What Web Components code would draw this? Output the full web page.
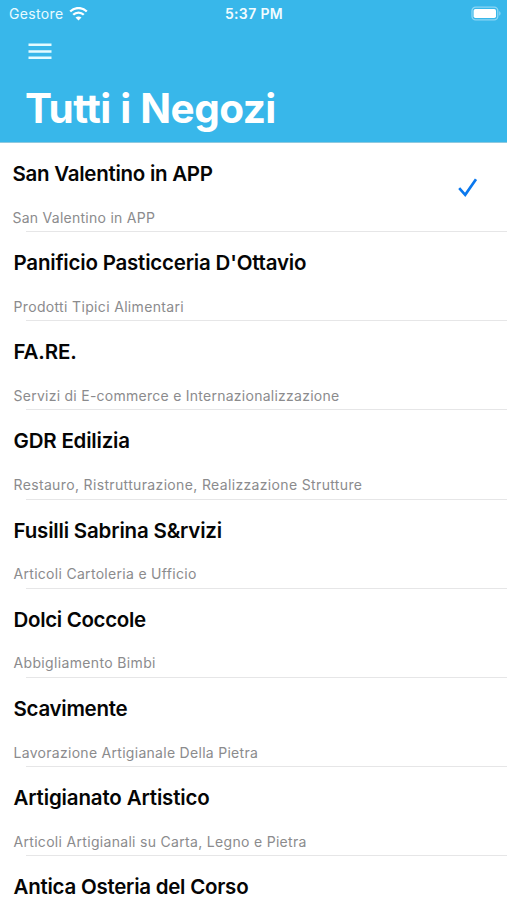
<!DOCTYPE html>
<html lang="it">
<head>
  <meta charset="utf-8">
  <meta name="viewport" content="width=device-width, initial-scale=1">
  <title>Tutti i Negozi</title>
  <style>
    body {
      margin: 0;
      height: 900px;
      overflow: hidden;
      background-color: #fff;
      font-family: Inter, Roboto, sans-serif;
    }
  </style>
</head>
<body>
  <shop-header>
    <status-bar slot="status" carrier="Gestore" time="5:37 PM"></status-bar>
    Tutti i Negozi
  </shop-header>
  <shop-list></shop-list>

  <script>
    class StatusBar extends HTMLElement {
      constructor() {
        super();
        this.shadowDOM = this.attachShadow({ mode: 'open' });
      }

      connectedCallback() {
        this.shadowDOM.innerHTML = `
          <style>
            :host {
              display: grid;
              grid-template-columns: 1fr auto 1fr;
              align-items: center;
              height: 28px;
              padding: 0 6px 0 9px;
              color: #e9fbff;
              font-size: 14px;
              line-height: 28px;
            }
            .carrier {
              display: flex;
              align-items: center;
              gap: 5px;
              letter-spacing: 0.35px;
            }
            .time {
              margin-right: 2px;
              font-weight: 600;
              font-size: 14px;
              letter-spacing: 0.35px;
              color: #f2fcff;
            }
            .battery {
              justify-self: end;
            }
            svg {
              display: block;
            }
          </style>
          <div class="carrier">
            <span>${this.getAttribute('carrier')}</span>
            <svg width="19" height="15" viewBox="0 0 19 15" fill="none" stroke="#fff" stroke-width="2.3">
              <path d="M1.2 4.5C5.8 -.1 13.2 -.1 17.8 4.5"/>
              <path d="M4.2 7.8c3-3 7.6-3 10.6 0"/>
              <path d="M9.5 13.6 6.5 10.6c1.7-1.6 4.3-1.6 6 0z" fill="#fff" stroke="none"/>
            </svg>
          </div>
          <span class="time">${this.getAttribute('time')}</span>
          <svg class="battery" width="31" height="16" viewBox="0 0 31 16">
            <rect x="2" y="1.2" width="25.8" height="12.6" rx="3.6" fill="none" stroke="#8bd6f4" stroke-width="1.3"/>
            <rect x="3.6" y="2.9" width="22.4" height="9.2" rx="1.8" fill="#fff"/>
            <path d="M29.2 5.3c1.8.6 1.8 3.8 0 4.4z" fill="#8bd6f4"/>
          </svg>
        `;
      }
    }

    class ShopHeader extends HTMLElement {
      constructor() {
        super();
        this.shadowDOM = this.attachShadow({ mode: 'open' });
      }

      connectedCallback() {
        this.shadowDOM.innerHTML = `
          <style>
            :host {
              display: flex;
              flex-direction: column;
              box-sizing: border-box;
              height: 143px;
              background-color: #38b7ea;
              border-bottom: 1px solid #8fc9df;
            }
            .menu {
              display: flex;
              align-self: flex-start;
              margin: 14px 0 0 28px;
              padding: 0;
              border: none;
              background: none;
            }
            h1 {
              margin: 23px 0 0 25px;
              color: #fff;
              font-size: 40.5px;
              line-height: 50px;
              font-weight: 700;
              letter-spacing: -0.55px;
              word-spacing: 0.5px;
              white-space: nowrap;
            }
          </style>
          <slot name="status"></slot>
          <button class="menu" aria-label="Menu">
            <svg width="24" height="19" viewBox="0 0 24 19" stroke="#e4fbff" stroke-width="2.5">
              <path d="M.5 2.8h23M.5 9.4h23M.5 15.8h23"/>
            </svg>
          </button>
          <h1><slot></slot></h1>
        `;
      }
    }

    class ShopItem extends HTMLElement {
      constructor() {
        super();
        this.shadowDOM = this.attachShadow({ mode: 'open' });
      }

      connectedCallback() {
        const check = this.hasAttribute('selected') ? `
          <svg width="20" height="20" viewBox="0 0 20 20" fill="none" stroke="#0a78ee" stroke-width="2.7">
            <path d="M1.2 10.2 7.2 16.8 18 1.2"/>
          </svg>
        ` : '';
        this.shadowDOM.innerHTML = `
          <style>
            :host {
              display: flex;
              justify-content: space-between;
              box-sizing: border-box;
              height: 89.17px;
              padding: 17px 29.5px 0 13.5px;
              background: linear-gradient(#e6e6e7, #e6e6e7) 26px 100% / 100% 1px no-repeat;
              white-space: nowrap;
            }
            :host([selected]) {
              padding-left: 12.5px;
            }
            h2 {
              margin: 0;
              color: #050505;
              font-size: 20.5px;
              line-height: 28px;
              font-weight: 600;
              letter-spacing: var(--title-spacing, -0.3px);
            }
            p {
              margin: 19.6px 0 0;
              color: #8b8b8d;
              font-size: 14px;
              line-height: 20px;
              letter-spacing: var(--detail-spacing, 0.3px);
            }
            svg {
              margin-top: 18px;
            }
          </style>
          <div>
            <h2><slot></slot></h2>
            <p><slot name="detail"></slot></p>
          </div>
          ${check}
        `;
      }
    }

    class ShopList extends HTMLElement {
      constructor() {
        super();
        this.shadowDOM = this.attachShadow({ mode: 'open' });
        // spacing: [title, detail] letter spacing in px
        this.shops = [
          { name: 'San Valentino in APP', detail: 'San Valentino in APP', spacing: [-0.27, 0.26], selected: true },
          { name: "Panificio Pasticceria D'Ottavio", detail: 'Prodotti Tipici Alimentari', spacing: [-0.2, 0.34] },
          { name: 'FA.RE.', detail: 'Servizi di E-commerce e Internazionalizzazione', spacing: [-0.15, 0.26] },
          { name: 'GDR Edilizia', detail: 'Restauro, Ristrutturazione, Realizzazione Strutture', spacing: [-0.2, 0.35] },
          { name: 'Fusilli Sabrina S&amp;rvizi', detail: 'Articoli Cartoleria e Ufficio', spacing: [-0.18, 0.3] },
          { name: 'Dolci Coccole', detail: 'Abbigliamento Bimbi', spacing: [-0.33, 0.35] },
          { name: 'Scavimente', detail: 'Lavorazione Artigianale Della Pietra', spacing: [-0.28, 0.29] },
          { name: 'Artigianato Artistico', detail: 'Articoli Artigianali su Carta, Legno e Pietra', spacing: [-0.15, 0.31] },
          { name: 'Antica Osteria del Corso', detail: '', spacing: [-0.25, 0.3] },
        ];
      }

      connectedCallback() {
        this.shadowDOM.innerHTML = `
          <style>
            :host {
              display: block;
            }
          </style>
          ${this.shops.map((shop) => `
            <shop-item
              ${shop.selected ? 'selected' : ''}
              style="--title-spacing: ${shop.spacing[0]}px; --detail-spacing: ${shop.spacing[1]}px"
            >
              ${shop.name}
              ${shop.detail ? `<span slot="detail">${shop.detail}</span>` : ''}
            </shop-item>
          `).join('')}
        `;
      }
    }

    customElements.define('status-bar', StatusBar);
    customElements.define('shop-header', ShopHeader);
    customElements.define('shop-item', ShopItem);
    customElements.define('shop-list', ShopList);
  </script>
</body>
</html>
